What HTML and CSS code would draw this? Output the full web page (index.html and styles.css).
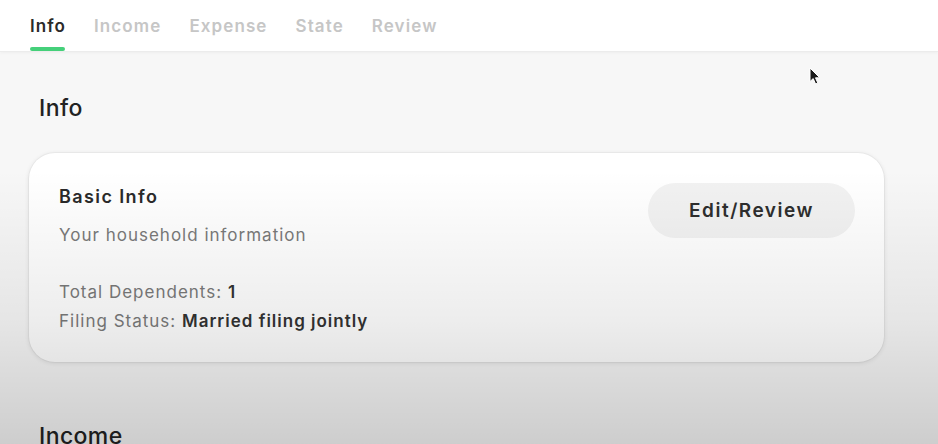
FILE: index.html
```html
<!DOCTYPE html>
<html lang="en">
<head>
<meta charset="utf-8">
<title>Taxes - Info</title>
<link rel="stylesheet" href="styles.css">
</head>
<body>
<header class="topbar">
  <nav class="tabs">
    <a class="tab active">Info</a>
    <a class="tab">Income</a>
    <a class="tab">Expense</a>
    <a class="tab">State</a>
    <a class="tab">Review</a>
  </nav>
</header>
<main class="content">
  <h2 class="section-title">Info</h2>
  <section class="card">
    <div class="card-body">
      <h3 class="card-title">Basic Info</h3>
      <p class="card-sub">Your household information</p>
      <div class="facts">
        <p class="fact">Total Dependents: <b>1</b></p>
        <p class="fact">Filing Status: <b>Married filing jointly</b></p>
      </div>
    </div>
    <button class="pill">Edit/Review</button>
  </section>
  <h2 class="section-title income">Income</h2>
</main>
<svg class="cursor" width="14" height="20" viewBox="0 0 14 20" aria-hidden="true">
  <path d="M1 1 L1 14.5 L4.2 11.6 L6.6 17 L8.8 16 L6.5 10.8 L10.8 10.8 Z" fill="#1a1a1a" stroke="#fff" stroke-width="1"/>
</svg>
<div class="vignette" aria-hidden="true"></div>
</body>
</html>
```
FILE: styles.css
```css
* { box-sizing: border-box; }
html, body { margin: 0; padding: 0; }
body {
  font-family: "Inter", "Noto Sans", sans-serif;
  background: #f7f7f7;
  color: #222;
  height: 444px;
  overflow: hidden;
  position: relative;
}
.topbar {
  background: #fff;
  height: 52px;
  border-bottom: 1px solid #ececec;
  box-shadow: 0 1px 3px rgba(0,0,0,0.04);
  padding-left: 30px;
}
.tabs {
  display: flex;
  gap: 28px;
  height: 100%;
}
.tab {
  position: relative;
  font-size: 17px;
  font-weight: 600;
  color: #c6c6c6;
  padding-top: 16px;
  letter-spacing: 1.1px;
}
.tab.active { color: #2a2a2a; }
.tab.active::after {
  content: "";
  position: absolute;
  left: 0;
  right: 1px;
  bottom: 0;
  height: 4px;
  border-radius: 2px;
  background: #45d07a;
}
.content {
  padding: 42px 54px 0 29px;
}
.section-title {
  margin: 0 0 31px 10px;
  font-size: 23px;
  font-weight: 500;
  color: #222;
  line-height: 28px;
  letter-spacing: 0.4px;
}
.section-title.income { margin-top: 60px; }
.card {
  background: #fff;
  border-radius: 26px;
  box-shadow: 0 1px 5px rgba(0,0,0,0.11), 0 0 0 1px rgba(0,0,0,0.03);
  padding: 32px 29px 30px 30px;
  display: flex;
  justify-content: space-between;
  align-items: flex-start;
  height: 209px;
}
.card-title {
  margin: 0;
  font-size: 18px;
  font-weight: 600;
  color: #2a2a2a;
  line-height: 24px;
  letter-spacing: 1.4px;
}
.card-sub {
  margin: 14px 0 0;
  font-size: 17px;
  color: #7a7a7a;
  line-height: 24px;
  letter-spacing: 1px;
}
.facts { margin-top: 31px; }
.fact {
  margin: 0;
  font-size: 17px;
  color: #7a7a7a;
  line-height: 29px;
  letter-spacing: 1px;
}
.fact b { font-weight: 600; color: #333; }
.pill {
  border: none;
  background: #f2f2f2;
  border-radius: 28px;
  width: 207px;
  height: 55px;
  margin-top: -2px;
  font-family: inherit;
  font-size: 19px;
  font-weight: 600;
  color: #2e2e2e;
  letter-spacing: 1.5px;
}
.cursor {
  position: absolute;
  left: 809px;
  top: 67px;
}
.vignette {
  position: absolute;
  left: 0; right: 0; top: 0; bottom: 0;
  pointer-events: none;
  background: linear-gradient(to bottom, rgba(0,0,0,0) 0px, rgba(0,0,0,0) 170px, rgba(0,0,0,0.07) 320px, rgba(0,0,0,0.17) 444px);
}
```
